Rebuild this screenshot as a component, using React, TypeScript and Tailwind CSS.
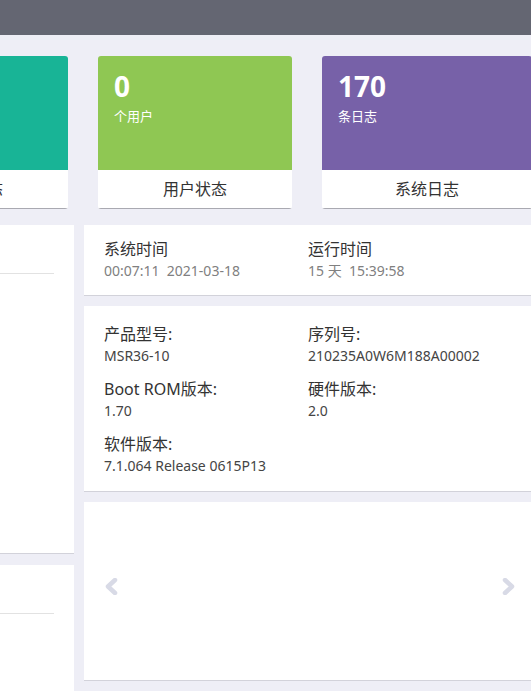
import React from "react";

const FONT = { fontFamily: '"Noto Sans", "Noto Sans CJK SC", sans-serif' };

function StatCard({
  color,
  value,
  unit,
  title,
  width,
}: {
  color: string;
  value: string;
  unit: string;
  title: string;
  width: string;
}) {
  return (
    <div className={`${width} shrink-0 overflow-hidden rounded-[3px]`}>
      <div className={`${color} h-[114px] px-4 pt-4 text-white`}>
        <p className="text-[28px] font-bold leading-[28px]">{value}</p>
        <p className="mt-[6px] text-[13px] leading-5">{unit}</p>
      </div>
      <div className="flex h-[39px] items-center justify-center border-b border-[#a9a9b1] bg-white text-[16px] text-[#333]">
        {title}
      </div>
    </div>
  );
}

function Field({ label, value }: { label: string; value: string }) {
  return (
    <div>
      <p className="text-[16px] leading-[22px] text-[#333]">{label}</p>
      <p className="text-[14px] leading-[22px] text-[#444]">{value}</p>
    </div>
  );
}

function Chevron({ dir }: { dir: "left" | "right" }) {
  const points = dir === "left" ? "10,2 3,8.5 10,15" : "3,2 10,8.5 3,15";
  return (
    <svg width="13" height="17" viewBox="0 0 13 17" fill="none">
      <polyline
        points={points}
        stroke="#d8dae6"
        strokeWidth="4.5"
        strokeLinecap="round"
        strokeLinejoin="round"
      />
    </svg>
  );
}

export default function App() {
  return (
    <div className="h-[691px] w-[531px] overflow-hidden bg-[#eeeef6]" style={FONT}>
      <div className="h-[35px] bg-[#646672]" />

      <div className="ml-[-126px] mt-[21px] flex gap-[30px]">
        <StatCard color="bg-[#18b496]" value="3" unit="个接口" title="接口状态" width="w-[194px]" />
        <StatCard color="bg-[#8fc753]" value="0" unit="个用户" title="用户状态" width="w-[194px]" />
        <StatCard color="bg-[#7761a8]" value="170" unit="条日志" title="系统日志" width="w-[210px]" />
      </div>

      <div className="mt-4 flex gap-[10px]">
        <div className="ml-[-126px] flex w-[200px] shrink-0 flex-col gap-[11px]">
          <div className="h-[329px] border-b border-[#d2d2da] bg-white">
            <div className="mr-5 h-[49px] border-b border-[#e2e2e2]" />
          </div>
          <div className="h-[200px] bg-white">
            <div className="mr-5 h-[49px] border-b border-[#e2e2e2]" />
          </div>
        </div>

        <div className="flex w-[460px] shrink-0 flex-col gap-[10px]">
          <div className="grid h-[71px] grid-cols-[204px_204px] border-b border-[#d2d2da] bg-white px-5 pt-[13px]">
            <div>
              <p className="text-[16px] leading-[22px] text-[#333]">系统时间</p>
              <p className="text-[14px] leading-[22px] text-[#808080]">00:07:11&nbsp;&nbsp;2021-03-18</p>
            </div>
            <div>
              <p className="text-[16px] leading-[22px] text-[#333]">运行时间</p>
              <p className="text-[14px] leading-[22px] text-[#808080]">15 天&nbsp;&nbsp;15:39:58</p>
            </div>
          </div>

          <div className="grid h-[186px] grid-cols-[204px_204px] content-start gap-y-[11px] border-b border-[#d2d2da] bg-white px-5 pt-[17px]">
            <Field label="产品型号:" value="MSR36-10" />
            <Field label="序列号:" value="210235A0W6M188A00002" />
            <Field label="Boot ROM版本:" value="1.70" />
            <Field label="硬件版本:" value="2.0" />
            <Field label="软件版本:" value="7.1.064 Release 0615P13" />
          </div>

          <div className="relative h-[179px] border-b border-[#d2d2da] bg-white">
            <div className="absolute left-[21px] top-[76px]">
              <Chevron dir="left" />
            </div>
            <div className="absolute left-[418px] top-[76px]">
              <Chevron dir="right" />
            </div>
          </div>
        </div>
      </div>
    </div>
  );
}
